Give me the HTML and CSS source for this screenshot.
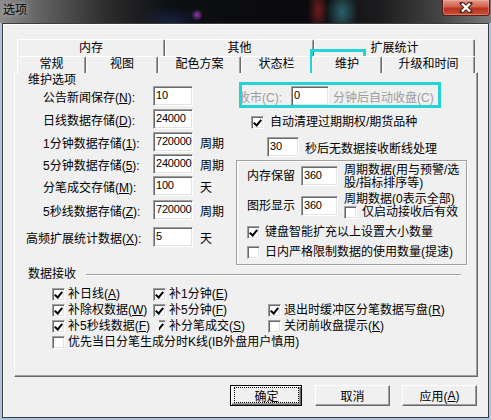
FILE: index.html
```html
<!DOCTYPE html>
<html lang="zh-CN">
<head>
  <meta charset="UTF-8" />
  <title>选项</title>
  <link rel="stylesheet" href="styles.css">
</head>
<body>
<div class="win">
  <div class="titlebar">
    <span class="title">选项</span>
    <span class="close">
      <svg width="14" height="11" viewBox="0 0 14 11">
        <path d="M3 1.5L11 9.5M11 1.5L3 9.5" stroke="#4a2620" stroke-width="4.4" stroke-linecap="square"/>
        <path d="M3 1.5L11 9.5M11 1.5L3 9.5" stroke="#fff" stroke-width="2.4"/>
      </svg>
    </span>
  </div>

  <div class="client">
    <div class="tabs">
      <div class="trow trow1">
        <div class="tab">内存</div>
        <div class="tab">其他</div>
        <div class="tab">扩展统计</div>
      </div>
      <div class="trow trow2">
        <div class="tab">常规</div>
        <div class="tab">视图</div>
        <div class="tab">配色方案</div>
        <div class="tab">状态栏</div>
        <div class="tab sel">维护</div>
        <div class="tab">升级和时间</div>
      </div>
    </div>

    <div class="panel">
      <div class="top">
        <!-- left: storage sizes -->
        <div class="col-l">
          <div class="legend">维护选项</div>
          <div class="fld f1"><span class="lbl">公告新闻保存(<u>N</u>):</span><span class="ed">10</span></div>
          <div class="fld f2"><span class="lbl">日线数据存储(<u>D</u>):</span><span class="ed">24000</span></div>
          <div class="fld f3"><span class="lbl">1分钟数据存储(<u>1</u>):</span><span class="ed">720000</span><span class="unit">周期</span></div>
          <div class="fld f4"><span class="lbl">5分钟数据存储(<u>5</u>):</span><span class="ed">240000</span><span class="unit">周期</span></div>
          <div class="fld f5"><span class="lbl">分笔成交存储(<u>M</u>):</span><span class="ed">100</span><span class="unit">天</span></div>
          <div class="fld f6"><span class="lbl">5秒线数据存储(<u>Z</u>):</span><span class="ed">720000</span><span class="unit">周期</span></div>
          <div class="fld f7"><span class="lbl wide">高频扩展统计数据(<u>X</u>):</span><span class="ed">5</span><span class="unit">天</span></div>
        </div>

        <!-- right: close / cleanup / memory -->
        <div class="col-r">
          <div class="ra">
            <span class="dis ra-l">收市(C):</span><span class="ed ed-s">0</span><span class="dis ra-t">分钟后自动收盘(C)</span>
          </div>
          <div class="rb"><span class="cb on"></span><span class="ctext">自动清理过期期权/期货品种</span></div>
          <div class="rc"><span class="ed ed-xs">30</span><span class="rc-t">秒后无数据接收断线处理</span></div>

          <div class="grp">
            <div class="g g1">
              <span class="glbl">内存保留</span><span class="ed ed-m">360</span>
              <span class="gtext g1t">周期数据(用与预警/选<br>股/指标排序等)</span>
            </div>
            <div class="g g2">
              <span class="glbl">图形显示</span><span class="ed ed-m">360</span>
              <div class="gtext g2t">
                <div>周期数据(0表示全部)</div>
                <div class="g2c"><span class="cb"></span><span class="ctext">仅启动接收后有效</span></div>
              </div>
            </div>
            <div class="g g3"><span class="cb on"></span><span class="ctext">键盘智能扩充以上设置大小数量</span></div>
            <div class="g g4"><span class="cb"></span><span class="ctext">日内严格限制数据的使用数量(提速)</span></div>
          </div>
        </div>
      </div>

      <div class="leg2"><span>数据接收</span><span class="rule"></span></div>
      <div class="chk-grid">
        <div class="ck"><span class="cb on"></span><span class="ctext">补日线(<u>A</u>)</span></div>
        <div class="ck"><span class="cb on"></span><span class="ctext">补1分钟(<u>E</u>)</span></div>
        <div class="ck"></div>

        <div class="ck"><span class="cb on"></span><span class="ctext">补除权数据(<u>W</u>)</span></div>
        <div class="ck"><span class="cb on"></span><span class="ctext">补5分钟(<u>F</u>)</span></div>
        <div class="ck"><span class="cb on"></span><span class="ctext">退出时缓冲区分笔数据写盘(<u>R</u>)</span></div>

        <div class="ck"><span class="cb on"></span><span class="ctext over">补5秒线数据(<u>F</u>)</span></div>
        <div class="ck"><span class="cb on"></span><span class="ctext">补分笔成交(<u>S</u>)</span></div>
        <div class="ck"><span class="cb"></span><span class="ctext">关闭前收盘提示(<u>K</u>)</span></div>

        <div class="ck full"><span class="cb"></span><span class="ctext">优先当日分笔生成分时K线(IB外盘用户慎用)</span></div>
      </div>
    </div>

    <div class="btns">
      <div class="btn def"><span class="focus">确定</span></div>
      <div class="btn">取消</div>
      <div class="btn">应用(<u>A</u>)</div>
    </div>
  </div>

  <div class="mark mark-tab"></div>
  <div class="mark mark-opt"></div>
</div>
</body>
</html>
```

FILE: styles.css
```css
body { margin: 0; font: 12px "Liberation Sans", "Noto Sans CJK SC", sans-serif; color: #000; }
u { text-decoration: underline; }

.win { width: 491px; height: 420px; background: #a9c4e3; position: relative; overflow: hidden; }

/* glass title bar */
.titlebar {
  height: 23px; display: flex; align-items: flex-start;
  background:
    radial-gradient(circle at 197px 15px, rgba(190, 70, 220, .75) 0, rgba(190, 70, 220, 0) 6px),
    radial-gradient(ellipse 10px 22px at 318px 10px, rgba(190, 40, 40, .55), rgba(190, 40, 40, 0)),
    radial-gradient(ellipse 16px 22px at 342px 12px, rgba(70, 190, 210, .45), rgba(70, 190, 210, 0)),
    radial-gradient(ellipse 30px 14px at 170px 20px, rgba(40, 60, 140, .35), rgba(40, 60, 140, 0)),
    linear-gradient(90deg, #8c8c8c 0, #626262 40px, #2a2a2a 110px, #0d0f13 170px, #0a0a0e 300px, #1c1c1e 380px, #454545 440px, #7a7a7a 491px);
}
.title { padding: 3px 0 0 3px; line-height: 14px; text-shadow: 0 0 5px rgba(220, 220, 220, .9); }
.close {
  margin-left: auto; margin-right: 1px; width: 48px; height: 16px; box-sizing: border-box;
  display: flex; align-items: center; justify-content: center;
  border: 1px solid #5b1d16; border-top: none; border-radius: 0 0 4px 4px;
  background: linear-gradient(#e29a88 0, #d0624c 45%, #b8321f 55%, #c8503a 100%);
  box-shadow: inset 0 0 0 1px rgba(255, 200, 190, .35);
}

.client {
  margin: 0 2px; height: 395px; box-sizing: border-box;
  border: 1px solid #3c3c3c; background: #f0f0f0; box-shadow: inset 1px 1px #fff;
}

/* tabs */
.tabs { margin: 15px 0 0 14px; width: 458px; }
.trow { display: grid; }
.trow1 { grid-template-columns: 148px 149px 161px; height: 17px; }
.trow2 { grid-template-columns: 69px 72px 83px 71px 70px 93px; height: 16px; }
.tab {
  box-sizing: border-box; text-align: center; background: #f0f0f0;
  border-top: 1px solid #fff; border-left: 1px solid #fff; border-right: 1px solid #696969;
  box-shadow: inset -1px 0 #a0a0a0; border-radius: 2px 2px 0 0;
}
.trow1 .tab { line-height: 16px; }
.trow2 .tab { line-height: 15px; }
.tab.sel { height: 17px; position: relative; z-index: 1; }

.panel {
  margin-left: 11px; width: 464px; height: 305px; box-sizing: border-box;
  border: 1px solid; border-color: #fff #696969 #696969 #fff; box-shadow: inset -1px -1px #a0a0a0;
}
.top { display: flex; height: 193px; }
.col-l { width: 221px; }
.col-r { width: 232px; }

/* edit boxes */
.ed {
  box-sizing: border-box; width: 40px; height: 20px; flex: none; background: #fff;
  border: 1px solid; border-color: #a0a0a0 #fff #fff #a0a0a0;
  box-shadow: inset 1px 1px #696969, inset -1px -1px #e3e3e3;
  font-size: 11px; letter-spacing: -0.2px; line-height: 17px; padding-left: 2px; overflow: hidden; white-space: nowrap;
}
.ed-s { width: 38px; }
.ed-xs { width: 32px; }
.ed-m { width: 37px; }

/* check boxes */
.cb {
  width: 13px; height: 13px; box-sizing: border-box; flex: none; position: relative; background: #fff;
  border: 1px solid; border-color: #a0a0a0 #fff #fff #a0a0a0;
  box-shadow: inset 1px 1px #696969, inset -1px -1px #e3e3e3;
}
.cb.on::after {
  content: ""; position: absolute; left: 3px; top: 1px; width: 3px; height: 6px;
  border: solid #000; border-width: 0 2px 2px 0; transform: rotate(40deg);
}
.ctext { line-height: 13px; white-space: nowrap; }

/* left column */
.legend { padding-left: 13px; margin-top: 1px; line-height: 13px; }
.fld { display: flex; align-items: center; height: 20px; }
.lbl { width: 138px; box-sizing: border-box; padding-left: 28px; white-space: nowrap; }
.lbl.wide { padding-left: 11px; }
.unit { margin-left: 7px; }
.f1 { margin-top: -1px; }
.f2, .f3 { margin-top: 3px; }
.f4, .f5 { margin-top: 2px; }
.f6 { margin-top: 4px; }
.f7 { margin-top: 7px; }

/* right column */
.ra { display: flex; align-items: center; height: 20px; margin-top: 13px; }
.dis { color: #9d9d9d; white-space: nowrap; }
.ra-l { width: 55px; box-sizing: border-box; padding-left: 2px; }
.ra-t { margin-left: 4px; }
.rb { display: flex; height: 13px; margin-top: 10px; padding-left: 15px; }
.rb .ctext { margin-left: 6px; }
.rc { display: flex; align-items: center; height: 20px; margin-top: 8px; padding-left: 31px; }
.rc-t { margin-left: 6px; white-space: nowrap; }

.grp {
  margin-top: 3px; width: 231px; height: 105px; box-sizing: border-box;
  border: 1px solid #a0a0a0; box-shadow: 1px 1px 0 #fff, inset 1px 1px 0 #fff;
}
.g { display: flex; align-items: flex-start; padding-left: 10px; }
.glbl { width: 54px; line-height: 20px; white-space: nowrap; }
.gtext { margin-left: 6px; margin-top: -1px; line-height: 12px; white-space: nowrap; }
.g1 { margin-top: 5px; }
.g1t { margin-top: -2px; line-height: 13px; }
.g2 { margin-top: 6px; }
.g2t { margin-top: -3px; }
.g2c { display: flex; margin-top: 1px; }
.g2c .ctext { margin-left: 5px; }
.g3, .g4 { margin-top: 7px; height: 13px; }
.g3 .ctext, .g4 .ctext { margin-left: 5px; }

/* data receive group */
.leg2 { display: flex; align-items: center; height: 13px; margin-top: 2px; padding-left: 13px; padding-right: 16px; line-height: 13px; }
.rule { flex: 1; margin-left: 10px; border-top: 1px solid #a0a0a0; border-bottom: 1px solid #fff; }
.chk-grid { display: grid; grid-template-columns: 101px 115px 1fr; grid-auto-rows: 16px; margin-top: 7px; padding-left: 37px; }
.ck { display: flex; align-items: flex-start; }
.ck .ctext { margin-left: 3px; }
.ck.full { grid-column: 1 / -1; }
.ctext.over { position: relative; z-index: 1; background: #f0f0f0; min-width: 91px; }

/* dialog buttons */
.btns { display: flex; justify-content: flex-end; gap: 12px; margin-top: 8px; padding-right: 11px; }
.btn {
  width: 75px; height: 21px; box-sizing: border-box; display: flex; align-items: center; justify-content: center;
  border: 1px solid; border-color: #fff #696969 #696969 #fff; box-shadow: inset -1px -1px #a0a0a0; background: #f0f0f0;
}
.btn.def {
  width: 72px; margin-right: 1px; border-color: #000;
  box-shadow: inset 1px 1px #fff, inset -1px -1px #696969, inset -2px -2px #a0a0a0;
}
.focus { flex: 1; align-self: stretch; margin: 1px 2px 2px 3px; border: 1px dotted #000; display: flex; align-items: center; justify-content: center; }

/* cyan annotation frames */
.mark { position: absolute; box-sizing: border-box; border: 3px solid #22d4d6; }
.mark-tab { left: 310px; top: 49px; width: 56px; height: 24px; }
.mark-opt { left: 239px; top: 82px; width: 202px; height: 26px; }
```
